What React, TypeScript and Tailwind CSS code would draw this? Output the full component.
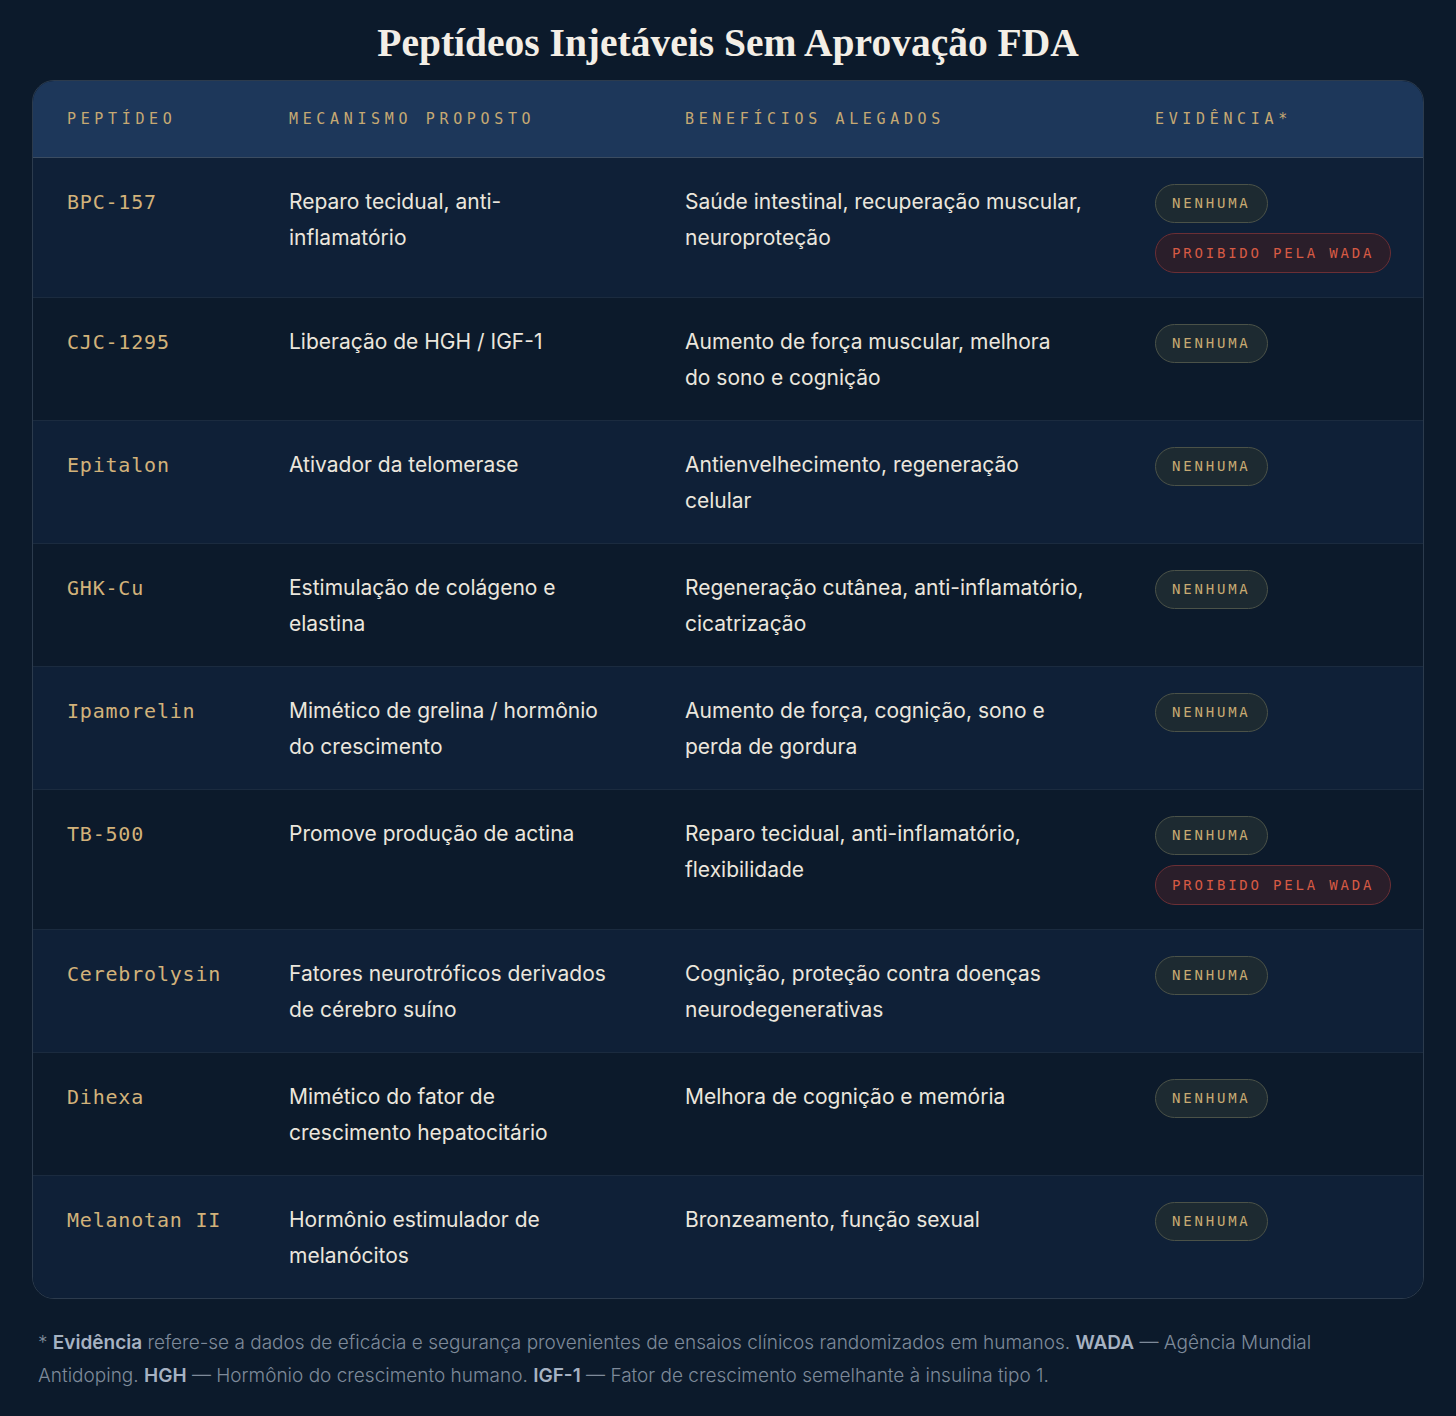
import React from 'react';

type Row = {
  name: string;
  mech: string;
  benefit: string;
  banned?: boolean;
};

const rows: Row[] = [
  { name: 'BPC-157', mech: 'Reparo tecidual, anti-\ninflamatório', benefit: 'Saúde intestinal, recuperação muscular,\nneuroproteção', banned: true },
  { name: 'CJC-1295', mech: 'Liberação de HGH / IGF-1', benefit: 'Aumento de força muscular, melhora\ndo sono e cognição' },
  { name: 'Epitalon', mech: 'Ativador da telomerase', benefit: 'Antienvelhecimento, regeneração\ncelular' },
  { name: 'GHK-Cu', mech: 'Estimulação de colágeno e\nelastina', benefit: 'Regeneração cutânea, anti-inflamatório,\ncicatrização' },
  { name: 'Ipamorelin', mech: 'Mimético de grelina / hormônio\ndo crescimento', benefit: 'Aumento de força, cognição, sono e\nperda de gordura' },
  { name: 'TB-500', mech: 'Promove produção de actina', benefit: 'Reparo tecidual, anti-inflamatório,\nflexibilidade', banned: true },
  { name: 'Cerebrolysin', mech: 'Fatores neurotróficos derivados\nde cérebro suíno', benefit: 'Cognição, proteção contra doenças\nneurodegenerativas' },
  { name: 'Dihexa', mech: 'Mimético do fator de\ncrescimento hepatocitário', benefit: 'Melhora de cognição e memória' },
  { name: 'Melanotan II', mech: 'Hormônio estimulador de\nmelanócitos', benefit: 'Bronzeamento, função sexual' },
];

const mono = "font-['DejaVu_Sans_Mono','Liberation_Mono',monospace]";
const sans = "font-['Inter','Noto_Sans',sans-serif]";

function App() {
  return (
    <div className={`min-h-screen bg-[#0c1a2b] ${sans}`}>
      {/* Title */}
      <div className="h-[80px] pt-2 flex items-center justify-center">
        <h1 className="font-['Liberation_Serif','DejaVu_Serif',serif] font-bold text-[39.5px] text-[#f3eee6]">
          Peptídeos Injetáveis Sem Aprovação FDA
        </h1>
      </div>

      {/* Table */}
      <div className="mx-[32px] rounded-[22px] border border-[#2c3b4d] overflow-hidden">
        <div className={`grid grid-cols-[222px_396px_470px_1fr] h-[77px] items-center bg-[#1d375a] border-b border-[#3b4c61] ${mono} text-[15px] tracking-[0.31em] text-[#c6a973]`}>
          <div className="pl-[34px]">PEPTÍDEO</div>
          <div className="pl-[34px]">MECANISMO PROPOSTO</div>
          <div className="pl-[34px]">BENEFÍCIOS ALEGADOS</div>
          <div className="pl-[34px]">EVIDÊNCIA*</div>
        </div>

        {rows.map((r, i) => (
          <div
            key={r.name}
            className={`grid grid-cols-[222px_396px_470px_1fr] pt-[26px] pb-[24px] ${
              i % 2 === 0 ? 'bg-[#0f2037]' : 'bg-[#0c1a2b]'
            } ${i < rows.length - 1 ? 'border-b border-[#1b2b3f]' : ''}`}
          >
            <div className={`pl-[34px] ${mono} text-[20px] leading-[36px] tracking-[0.04em] text-[#d2b27a]`}>
              {r.name}
            </div>
            <div className="pl-[34px] text-[21px] leading-[36px] text-[#ebe6dd] whitespace-pre-line">{r.mech}</div>
            <div className="pl-[34px] text-[21px] leading-[36px] text-[#ebe6dd] whitespace-pre-line">{r.benefit}</div>
            <div className="pl-[34px] flex flex-col items-start gap-[10px]">
              <span className={`h-[39px] flex items-center px-4 rounded-full border border-[#4b5248] bg-[#1d2a31] ${mono} text-[14px] tracking-[0.2em] text-[#c8aa72]`}>
                NENHUMA
              </span>
              {r.banned && (
                <span className={`h-[40px] flex items-center px-4 rounded-full border border-[#6b2f35] bg-[#2a1e2a] ${mono} text-[14px] tracking-[0.2em] text-[#d65a44]`}>
                  PROIBIDO PELA WADA
                </span>
              )}
            </div>
          </div>
        ))}
      </div>

      {/* Footnote */}
      <p className="mx-[32px] px-[6px] mt-[27px] text-[19px] leading-[33px] font-light text-[#7e8a9a]">
        * <b className="font-semibold text-[#a6b2c2]">Evidência</b> refere-se a dados de eficácia e segurança provenientes de ensaios clínicos randomizados em humanos.{' '}
        <b className="font-semibold text-[#a6b2c2]">WADA</b> — Agência Mundial
        <br />
        Antidoping. <b className="font-semibold text-[#a6b2c2]">HGH</b> — Hormônio do crescimento humano.{' '}
        <b className="font-semibold text-[#a6b2c2]">IGF-1</b> — Fator de crescimento semelhante à insulina tipo 1.
      </p>
    </div>
  );
}

export default App;
